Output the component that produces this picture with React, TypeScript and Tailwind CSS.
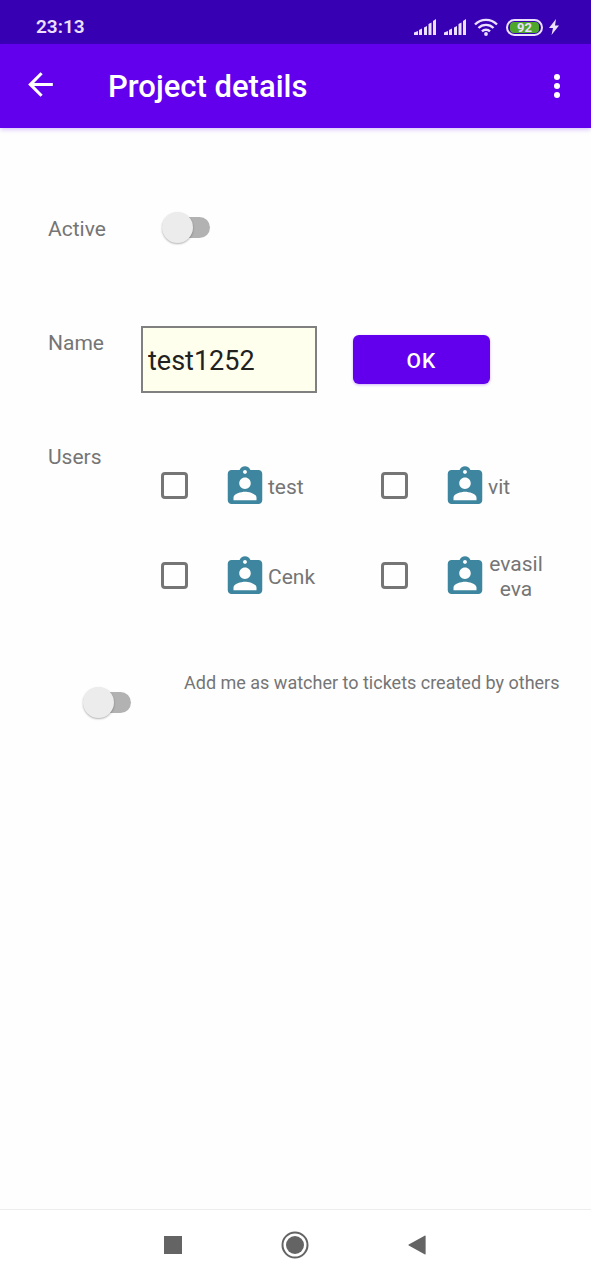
import { useState } from 'react'
import { clsx } from 'clsx'

const users = ['test', 'vit', 'Cenk', 'evasil eva']

function SignalIcon() {
  return (
    <svg className="h-4 w-[22px]" viewBox="0 0 22 16" fill="currentColor" aria-hidden="true">
      <path d="M0 16v-2.500l4-1.500v4zM5 16v-5l3-1.500V16zM10 16V8.500L13 7v9zM14.500 16V5L17.500 3.500V16zM19 16V2l3-2v16z" />
    </svg>
  )
}

function WifiIcon() {
  return (
    <svg className="h-[18px] w-6" viewBox="0 0 24 18" fill="none" stroke="currentColor" strokeWidth="2.400" aria-hidden="true">
      <path d="M1 6.500a15.500 15.500 0 0 1 22 0" />
      <path d="M4.500 10a10.600 10.600 0 0 1 15 0" />
      <path d="M8 13.400a5.700 5.700 0 0 1 8 0" />
      <circle cx="12" cy="16" r="1.900" fill="currentColor" stroke="none" />
    </svg>
  )
}

function UserBadge() {
  return (
    <svg className="h-[46px] w-[46px] shrink-0 text-[#3e869f]" viewBox="0 0 24 24" fill="currentColor" aria-hidden="true">
      <path d="M19 3h-4.180C14.400 1.840 13.300 1 12 1c-1.300 0-2.400.84-2.820 2H5c-1.100 0-2 .9-2 2v14c0 1.100.9 2 2 2h14c1.100 0 2-.9 2-2V5c0-1.100-.9-2-2-2zm-7 0c.55 0 1 .45 1 1s-.45 1-1 1-1-.45-1-1 .45-1 1-1zm0 4c1.660 0 3 1.340 3 3s-1.340 3-3 3-3-1.340-3-3 1.340-3 3-3zm6 12H6v-1.400c0-2 4-3.100 6-3.100s6 1.100 6 3.100V19z" transform="translate(12 12) scale(1 0.980) translate(-12 -12)" />
    </svg>
  )
}

function Switch({ id, className }: { id: string; className?: string }) {
  return (
    <span className={clsx('relative flex h-[31px] w-12 shrink-0 items-center justify-end', className)}>
      <input
        id={id}
        type="checkbox"
        role="switch"
        className="peer h-[21px] w-9 appearance-none rounded-full bg-[#b2b2b2] checked:bg-[#b794f6]"
      />
      <span className="pointer-events-none absolute top-0 left-0 size-[31px] rounded-full bg-[#ececec] shadow-[0_1px_2px_rgba(0,0,0,0.3)] peer-checked:left-[17px] peer-checked:bg-[#6200ee]" />
    </span>
  )
}

export default function App() {
  const [name, setName] = useState('test1252')

  return (
    <div className="flex min-h-screen flex-col bg-[#fefefe] font-[Roboto,sans-serif] text-[21px] leading-6 text-[#757575]">
      {/* Status bar */}
      <div className="flex h-11 items-center justify-between bg-[#3700b3] pt-2.5 pr-8 pl-9 text-[#ebe0ff]">
        <span className="text-[19px] font-semibold">23:13</span>
        <div className="flex items-center">
          <SignalIcon />
          <span className="w-2" />
          <SignalIcon />
          <span className="w-2" />
          <WifiIcon />
          <span className="ml-2 flex h-[17px] w-[37px] items-center justify-center rounded-full border-2 border-current p-0.5">
            <span className="flex h-[11px] w-full items-center justify-center rounded-sm bg-[#4ea72c] text-[13px] leading-none font-bold">92</span>
          </span>
          <svg className="ml-1.5 h-4 w-2.5" viewBox="0 0 10 16" fill="currentColor" aria-hidden="true">
            <path d="M7 0 0 9h4L2.500 16 10 6.500H6z" />
          </svg>
        </div>
      </div>

      {/* App bar */}
      <header className="flex h-21 items-center bg-[#6200ee] pr-4 pl-5 text-white shadow-[0_1px_5px_rgba(98,0,238,0.3)]">
        <button type="button" aria-label="Back" className="flex size-11 items-center justify-center">
          <svg className="mr-1 mb-1 size-[37px]" viewBox="0 0 24 24" fill="currentColor">
            <path d="M20 11H7.830l5.590-5.590L12 4l-8 8 8 8 1.410-1.410L7.830 13H20v-2z" />
          </svg>
        </button>
        <h1 className="ml-11 flex-1 pt-0.5 text-[31px] leading-9 font-medium">Project details</h1>
        <button type="button" aria-label="More options" className="flex h-11 w-9 items-center justify-center">
          <svg className="h-6 w-2" viewBox="0 0 8 24" fill="currentColor">
            <circle cx="4" cy="3" r="3" />
            <circle cx="4" cy="12" r="3" />
            <circle cx="4" cy="21" r="3" />
          </svg>
        </button>
      </header>

      <main className="flex-1 pt-21 pl-12">
        <div className="flex h-[114px] items-start">
          <label htmlFor="active" className="w-[93px] shrink-0 pt-[5px]">Active</label>
          <Switch id="active" className="ml-[21px]" />
        </div>

        <div className="flex h-[114px] items-start">
          <label htmlFor="name" className="w-[93px] shrink-0 pt-[5px]">Name</label>
          <input
            id="name"
            type="text"
            value={name}
            onChange={(e) => setName(e.target.value)}
            className="h-[67px] w-44 border-2 border-[#808080] bg-[#ffffee] px-[5px] pt-0.5 text-[27px] text-[#212121] outline-none"
          />
          <button
            type="button"
            className="mt-[9px] ml-9 h-[49px] w-[137px] rounded-md bg-[#6200ee] pt-0.5 font-medium tracking-wider text-white shadow-[0_1px_3px_rgba(98,0,238,0.3)]"
          >
            OK
          </button>
        </div>

        <div className="flex items-start" role="group" aria-labelledby="users">
          <span id="users" className="w-[93px] shrink-0 pt-[5px]">Users</span>
          <div className="grid flex-1 grid-cols-2 pt-0.5 pr-2.5">
            {users.map((user) => (
              <div key={user} className="flex h-[90px] items-center pl-5">
                <input
                  id={user}
                  type="checkbox"
                  className="mb-[3px] size-[27px] shrink-0 appearance-none rounded-sm border-3 border-[#757575] checked:bg-[#757575]"
                />
                <label htmlFor={user} className="ml-[34px] flex items-center text-center leading-[25px]">
                  <UserBadge />
                  <span className="max-w-14">{user}</span>
                </label>
              </div>
            ))}
          </div>
        </div>

        <div className="flex items-start pt-[49px] pl-[35px]">
          <Switch id="watcher" className="mt-4" />
          <label htmlFor="watcher" className="ml-[53px] text-[18px]">
            Add me as watcher to tickets created by others
          </label>
        </div>
      </main>

      {/* Navigation bar */}
      <nav className="flex h-[71px] items-center justify-center gap-[94px] border-t border-[#ededed] bg-white pr-0.5 text-[#646464]">
        <button type="button" aria-label="Recent apps" className="flex size-7 items-center justify-center">
          <svg className="size-[18px]" viewBox="0 0 18 18" fill="currentColor">
            <path d="M0 0h18v18H0z" />
          </svg>
        </button>
        <button type="button" aria-label="Home" className="flex size-7 items-center justify-center">
          <svg className="size-7" viewBox="0 0 28 28" fill="currentColor">
            <circle cx="14" cy="14" r="12.500" fill="none" stroke="currentColor" strokeWidth="2" />
            <circle cx="14" cy="14" r="9" />
          </svg>
        </button>
        <button type="button" aria-label="Back" className="flex size-7 items-center justify-center">
          <svg className="h-5 w-[18px]" viewBox="0 0 18 20" fill="currentColor">
            <path d="M17 0.500q.6-.3.6.4v18.200q0 .7-.6.4L.7 10.500q-.7-.5 0-1z" />
          </svg>
        </button>
      </nav>
    </div>
  )
}
